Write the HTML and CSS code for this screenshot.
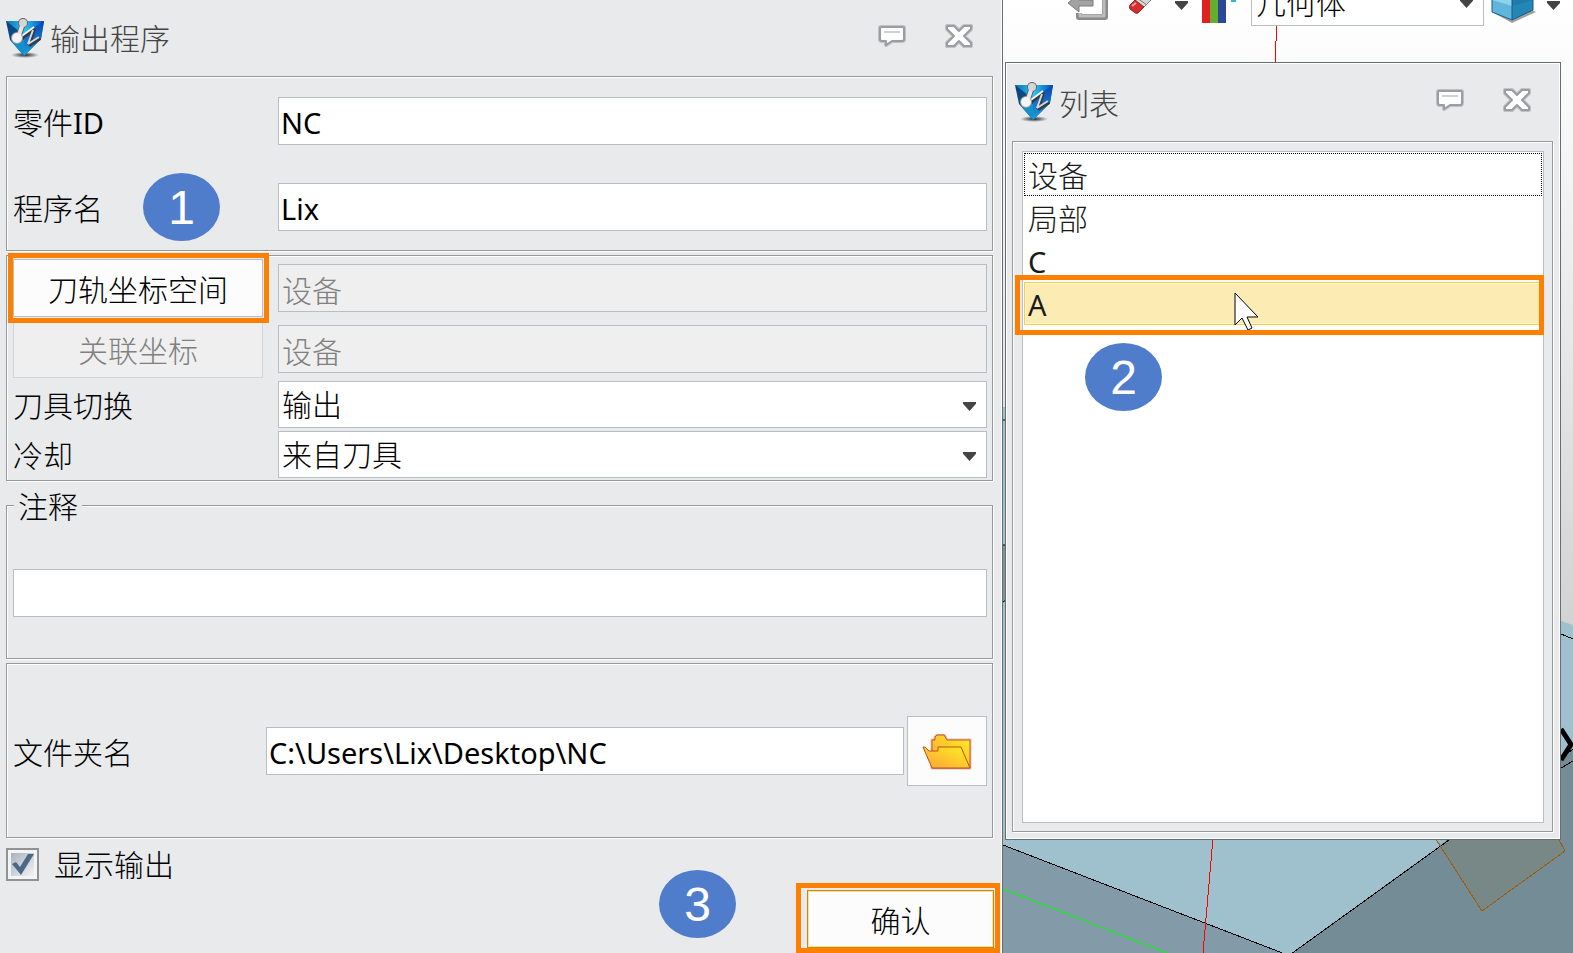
FILE: index.html
```html
<!DOCTYPE html>
<html lang="zh-CN">
<head>
<meta charset="utf-8">
<title>输出程序</title>
<link rel="stylesheet" href="styles.css">
</head>
<body>
<svg class="defs" aria-hidden="true">
  <defs>
    <linearGradient id="blueL" x1="0" y1="0" x2="1" y2="1"><stop offset="0" stop-color="#0c3f78"/><stop offset="1" stop-color="#0a6fae"/></linearGradient>
    <linearGradient id="blueR" x1="0" y1="0" x2="0" y2="1"><stop offset="0" stop-color="#0744b4"/><stop offset="1" stop-color="#1d9fdc"/></linearGradient>
    <linearGradient id="blueT" x1="0" y1="0" x2="1" y2="0"><stop offset="0" stop-color="#0e6fb8"/><stop offset=".5" stop-color="#22c9f2"/><stop offset="1" stop-color="#0746b8"/></linearGradient>
    <radialGradient id="shade"><stop offset="0" stop-color="#222"/><stop offset="1" stop-color="#222" stop-opacity="0"/></radialGradient>
    <symbol id="logo" viewBox="0 0 38 40">
      <ellipse cx="19" cy="37" rx="14" ry="3" fill="url(#shade)"/>
      <path d="M0 3H38L35 21 18 38 4 22Z" fill="url(#blueL)"/>
      <path d="M0 3H38L18 17Z" fill="url(#blueT)"/>
      <path d="M38 3L35 21 18 38V17Z" fill="url(#blueR)"/>
      <path d="M6 19L18 22V38L7 25Z" fill="#1590cf"/>
      <path d="M15 20L28 11 23 27 34 20" fill="none" stroke="#333b45" stroke-width="4" stroke-linejoin="bevel"/>
      <path d="M13 20L28 9" fill="none" stroke="#f4f4f4" stroke-width="2"/>
      <path d="M27 12L22 26 33 19" fill="none" stroke="#d4d6d9" stroke-width="2" stroke-linejoin="bevel"/>
      <path d="M17 6L12 19" stroke="#666" stroke-width="6"/>
      <circle cx="17" cy="5" r="5" fill="#666"/><circle cx="11" cy="20" r="6" fill="#999"/>
      <path d="M17 5L12 20" stroke="#e4e4e4" stroke-width="4"/>
      <circle cx="17" cy="5" r="4" fill="#d6d6d6"/><circle cx="11" cy="20" r="5" fill="#f4f4f4"/>
    </symbol>
    <symbol id="chat" viewBox="0 0 28 22">
      <path d="M3 2H25Q26 2 26 3V14Q26 16 24 16H14L8 20V16H4Q2 16 2 14V3Q2 2 3 2Z" fill="#fdfdfd" stroke="#bfc1c5" stroke-width="4" stroke-linejoin="round"/>
      <path d="M3 2H25Q26 2 26 3V14Q26 16 24 16H14L8 20V16H4Q2 16 2 14V3Q2 2 3 2Z" fill="#fdfdfd" stroke="#9b9da2" stroke-width="2" stroke-linejoin="round"/>
      <path d="M6 7H22" stroke="#d0d1d4" stroke-width="2"/>
    </symbol>
    <symbol id="close" viewBox="0 0 28 24">
      <path d="M2 2H9L14 7 19 2H26V5L19 12 26 19V22H19L14 17 9 22H2V19L9 12 2 5Z" fill="#fff" stroke="#bfc1c5" stroke-width="4" stroke-linejoin="round"/>
      <path d="M2 2H9L14 7 19 2H26V5L19 12 26 19V22H19L14 17 9 22H2V19L9 12 2 5Z" fill="#fff" stroke="#9b9da2" stroke-width="2" stroke-linejoin="round"/>
    </symbol>
  </defs>
</svg>
<main class="app">
  <form class="panel">
    <header class="head">
      <svg class="logo" aria-hidden="true"><use href="#logo"/></svg>
      <h1 class="title">输出程序</h1>
      <button class="tool" type="button" aria-label="帮助"><svg class="chat"><use href="#chat"/></svg></button>
      <button class="tool" type="button" aria-label="关闭"><svg class="close"><use href="#close"/></svg></button>
    </header>

    <section class="group names">
      <label for="part">零件<span class="latin">ID</span></label>
      <input id="part" class="field latin" type="text" value="NC">
      <label for="prog">程序名</label>
      <input id="prog" class="field latin" type="text" value="Lix">
      <span class="badge badge-one">1</span>
    </section>

    <section class="group options">
      <span class="marked"><button class="btn wide" type="button">刀轨坐标空间</button></span>
      <input class="field" type="text" value="设备" aria-label="刀轨坐标空间" disabled>
      <button class="btn wide" type="button" disabled>关联坐标</button>
      <input class="field" type="text" value="设备" aria-label="关联坐标" disabled>
      <label for="change">刀具切换</label>
      <span class="drop"><select id="change" class="field"><option>输出</option></select></span>
      <label for="cool">冷却</label>
      <span class="drop"><select id="cool" class="field"><option>来自刀具</option></select></span>
    </section>

    <section class="group notes">
      <label class="legend" for="note">注释</label>
      <input id="note" class="field" type="text">
    </section>

    <section class="group folder">
      <label for="dir">文件夹名</label>
      <input id="dir" class="field latin" type="text" value="C:\Users\Lix\Desktop\NC">
      <button class="btn browse" type="button" aria-label="浏览">
        <svg width="50" height="36" viewBox="0 0 50 36">
          <defs><linearGradient id="fold" x1="0" y1="1" x2="1" y2="0"><stop offset="0" stop-color="#faa23a"/><stop offset="1" stop-color="#ffef20"/></linearGradient></defs>
          <path d="M10 34V6H13V3L15 1H22L25 6H48V34Z" fill="url(#fold)" stroke="#e9b9ac" stroke-width="3"/>
          <path d="M10 34V6H13V3L15 1H22L25 6H48V34Z" fill="url(#fold)" stroke="#bd5a2a"/>
          <path d="M10 34L1 13 3 13 7 17H16V13H39L48 34Z" fill="url(#fold)" stroke="#b9521f"/>
        </svg>
      </button>
    </section>

    <label class="check">
      <span class="tick">
        <input type="checkbox" checked>
        <svg viewBox="0 0 33 33" aria-hidden="true">
          <defs><linearGradient id="box" x1="0" y1="0" x2="1" y2="1"><stop offset="0" stop-color="#a8b2bd"/><stop offset="1" stop-color="#f2f3f4"/></linearGradient></defs>
          <rect x="5" y="5" width="23" height="23" fill="url(#box)"/>
          <path d="M6 16L10 14 14 19 22 6H28L15 27Z" fill="#4c6886"/>
        </svg>
      </span>
      显示输出
    </label>

    <footer class="foot">
      <span class="badge badge-three">3</span>
      <span class="marked"><button class="btn ok" type="submit">确认</button></span>
    </footer>
  </form>

  <section class="stage">
    <svg class="scene" viewBox="0 0 570 953" preserveAspectRatio="xMinYMin slice" aria-hidden="true">
      <defs><linearGradient id="sky" x1="0" y1="0" x2="0" y2="1"><stop offset="0" stop-color="#fff"/><stop offset=".12" stop-color="#f8f8f8"/><stop offset=".65" stop-color="#d3d3d3"/></linearGradient></defs>
      <rect width="570" height="953" fill="url(#sky)"/>
      <path d="M0 407H300L558 621 570 625V953H0Z" fill="#9fc0cd"/>
      <path d="M0 545H10V601H0Z" fill="#7d949f"/>
      <path d="M0 420H3M0 545H3M0 602L3 600" stroke="#000"/>
      <path d="M0 845L284 955H0Z" fill="#839ba8"/>
      <path d="M286 955L445 840 570 748V953Z" fill="#748c96"/>
      <path d="M558 765L570 750V953H558Z" fill="#748c96"/>
      <path d="M432 838L479 911 562 851 555 838Z" fill="#778886"/>
      <path d="M432 838H446L438 845Z" fill="#a0b9bf"/>
      <g fill="none" shape-rendering="crispEdges">
        <path d="M0 845L282 954M288 954L446 840M558 634L570 639M565 753L570 749M558 768L570 761" stroke="#000"/>
        <path d="M432 838L479 911 562 851 555 838" stroke="#9c5d0c"/>
        <path d="M0 889L167 954" stroke="#0f0"/>
        <path d="M275 0L272 62M210 838L200 953" stroke="#f00"/>
      </g>
      <path d="M558 729L568 744.500 558 760" fill="none" stroke="#000" stroke-width="5"/>
    </svg>

    <div class="bar">
      <svg width="120" height="26" viewBox="0 0 120 26" aria-hidden="true">
        <path d="M14 13V17H40V-2" fill="none" stroke="#8b8b8b" stroke-width="6" stroke-linejoin="round"/>
        <path d="M15 13V16H39V-2" fill="none" stroke="#bcbcbc" stroke-width="3" stroke-linejoin="round"/>
        <path d="M3 3L14-6V0H28V6H14V12Z" fill="#a2a2a2" stroke="#7c7c7c"/>
        <path d="M65 5L78-8 88-2 74 12Z" fill="#d8d8d8" stroke="#777"/>
        <path d="M72-2L82 5" stroke="#777"/>
        <path d="M65 5L70 0 79 7 73 13Q71 14 69 12L65 9Q64 7 65 5Z" fill="#cf3030" stroke="#a01d1d"/>
        <path d="M67 6L71 3" stroke="#f6a0a0" stroke-width="2"/>
        <path d="M110 1H123V3L116.500 10 110 3Z" fill="#444"/>
      </svg>
      <svg width="66" height="26" viewBox="0 0 66 26" aria-hidden="true">
        <path d="M17 0H25V23H17Z" fill="#e32020"/><path d="M25 0H33V23H25Z" fill="#67ad2d"/><path d="M33 0H41V23H33Z" fill="#2b4897"/>
        <path d="M46 0H51V2H46Z" fill="#2fb6d4"/>
      </svg>
      <span class="drop filter"><select class="field" aria-label="过滤器"><option>几何体</option></select></span>
      <svg width="89" height="26" viewBox="0 0 89 26" aria-hidden="true">
        <path d="M8 12L28 23 52 12 44 8H14Z" fill="#777" opacity=".7"/>
        <path d="M8-8H28V20L8 12Z" fill="#8ed3ee"/><path d="M28-2L49-8V10L28 20Z" fill="#1d7cab"/>
        <path d="M8 0L28 6V20L8 12Z" fill="#5fb5da"/><path d="M28 6L49 0V10L28 20Z" fill="#2386b5"/>
        <path d="M8-8V12L28 20 49 10V-8M28 20V-2" fill="none" stroke="#155f86"/>
        <path d="M63 1H76V3L69.500 10 63 3Z" fill="#444"/>
      </svg>
    </div>

    <section class="dialog">
      <header class="head">
        <svg class="logo" aria-hidden="true"><use href="#logo"/></svg>
        <h2 class="title">列表</h2>
        <button class="tool" type="button" aria-label="帮助"><svg class="chat"><use href="#chat"/></svg></button>
        <button class="tool" type="button" aria-label="关闭"><svg class="close"><use href="#close"/></svg></button>
      </header>
      <div class="group frame">
        <ul class="list" role="listbox" aria-label="列表">
          <li class="item focus" role="option">设备</li>
          <li class="item" role="option">局部</li>
          <li class="item latin" role="option">C</li>
          <li class="item latin hot" role="option" aria-selected="true">A
            <svg class="cursor" width="26" height="40" viewBox="0 0 26 40" aria-hidden="true"><path d="M1 1V33L8 26 14 38 18 36 13 25H24Z" fill="#fff" stroke="#000"/></svg>
          </li>
        </ul>
        <span class="badge badge-two">2</span>
      </div>
    </section>
  </section>
</main>
</body>
</html>
```
FILE: styles.css
```css
* { box-sizing: border-box; }
body {
  margin: 0;
  background: #e8eaeb;
  color: #000;
  font: 300 30px/40px "Noto Sans", "Noto Sans CJK SC", sans-serif;
  overflow: hidden;
}
.defs { position: absolute; width: 0; height: 0; }
input, select, button { font: inherit; color: inherit; margin: 0; border-radius: 0; }
.latin { font-size: 29px; font-weight: 400; }

.app {
  display: grid;
  grid-template-columns: 1003fr 570fr;
  min-height: 100vh;
}
.panel {
  display: flex;
  flex-direction: column;
  min-width: 0;
  padding: 0 9px 0 6px;
  background: #e8eaeb;
  border-right: 1px solid #666d73;
  box-shadow: inset -1px 0 0 #fff;
}

.head {
  display: flex;
  align-items: center;
  height: 76px;
}
.logo { width: 38px; height: 40px; }
.title {
  flex: 1;
  margin: 2px 0 0 6px;
  color: #444;
  font-size: 30px;
  font-weight: 300;
}
.tool {
  display: flex;
  margin: 0 20px 5px 19px;
  padding: 0;
  border: 0;
  background: none;
}
.chat { width: 28px; height: 22px; }
.close { width: 28px; height: 24px; }
.tool svg { overflow: visible; }

.group {
  position: relative;
  border: 1px solid #999;
  box-shadow: 1px 1px 0 #fff, inset 1px 1px 0 #fff;
}
.group > label { padding-top: 3px; }
.field {
  width: 100%;
  min-width: 0;
  height: 48px;
  padding: 1px 3px 0;
  border: 1px solid #b8bec4;
  background: #fff;
  outline: 0;
}
.field.latin { padding: 2px 2px 0; }
.field:disabled { background: #efefef; color: #808080; }
select.field { height: 47px; appearance: none; }

.drop { position: relative; display: flex; }
.drop::after {
  content: "";
  position: absolute;
  top: 21px;
  right: 11px;
  width: 13px;
  height: 9px;
  background: #444;
  clip-path: polygon(0 0, 100% 0, 100% 20%, 50% 100%, 0 20%);
  pointer-events: none;
}

.names {
  display: grid;
  grid-template-columns: 265px 1fr;
  align-items: center;
  row-gap: 38px;
  padding: 20px 5px 19px 6px;
}
.options {
  display: grid;
  grid-template-columns: 250px 1fr;
  align-items: center;
  gap: 3px 15px;
  margin-top: 4px;
  padding: 3px 5px 2px 6px;
}
.notes { margin-top: 24px; padding: 63px 5px 41px 6px; }
.notes .field { display: block; }
.group > .legend {
  position: absolute;
  top: -20px;
  left: 7px;
  padding: 1px 4px 0;
  background: #e8eaeb;
}
.folder {
  display: grid;
  grid-template-columns: 250px 1fr 80px;
  align-items: center;
  column-gap: 3px;
  margin-top: 4px;
  padding: 52px 5px 51px 6px;
}

.btn {
  height: 58px;
  padding: 3px 0 0;
  border: 1px solid #b8bec4;
  background: #fcfcfc;
}
.btn:disabled { border-color: #d2d5d8; background: #efefef; color: #808080; }
.wide { width: 100%; }
.browse {
  display: flex;
  align-items: center;
  justify-content: center;
  height: 70px;
  padding: 1px 0 0;
}
.ok {
  width: 187px;
  border-color: #bf8a2c;
  box-shadow: inset 0 0 0 1px #ffe27a;
}

.marked { position: relative; z-index: 1; display: flex; }
.marked::after {
  content: "";
  position: absolute;
  inset: -6px -6px -6px -5px;
  border: 5px solid #ff8000;
  pointer-events: none;
}

.check {
  display: flex;
  align-items: center;
  gap: 15px;
  height: 33px;
  margin-top: 10px;
}
.tick { position: relative; display: flex; }
.tick input {
  width: 33px;
  height: 33px;
  appearance: none;
  border: 2px solid #929292;
  background: #f3f4f5;
}
.tick svg { position: absolute; inset: 0; pointer-events: none; }

.foot {
  position: relative;
  display: flex;
  justify-content: flex-end;
  margin: 9px -1px 0 0;
}
.foot .marked::after { inset: -7px -6px -5px -11px; }

.badge {
  position: absolute;
  width: 77px;
  height: 68px;
  border-radius: 50%;
  background: #4f7dcb;
  color: #fff;
  font: 48px/70px "Liberation Sans", sans-serif;
  text-align: center;
}
.badge-one { left: 136px; top: 96px; }
.badge-two { left: 72px; top: 201px; }
.badge-three { right: 258px; top: -20px; }

.stage { position: relative; min-width: 0; overflow: hidden; }
.scene { position: absolute; inset: 0; width: 100%; height: 100%; }
.bar {
  position: relative;
  display: flex;
  align-items: flex-end;
  height: 26px;
  padding-left: 62px;
  overflow: hidden;
}
.bar svg { flex: none; overflow: visible; }
.filter { flex: 1; }
.filter .field { height: 48px; padding: 2px 4px 0; }
.dialog {
  position: absolute;
  inset: 62px 12px 113px 2px;
  display: flex;
  flex-direction: column;
  padding: 0 7px 7px 6px;
  background: #e8eaeb;
  border: 1px solid #666d73;
  box-shadow: inset 0 0 0 1px #fff;
}
.dialog .head { height: 78px; padding: 0 2px 0 3px; }
.dialog .title { margin-top: 3px; }
.frame { flex: 1; display: flex; padding: 9px 8px 8px 9px; }
.list {
  flex: 1;
  margin: 0;
  padding: 1px;
  list-style: none;
  background: #fff;
  border: 1px solid #b8bec4;
}
.item {
  position: relative;
  height: 43px;
  padding: 2px 3px 0;
  border: 1px solid transparent;
  color: #1a1a1a;
}
.focus { border: 1px dotted #000; }
.hot {
  border-color: #f6cf4e;
  background: #fcecb3;
  box-shadow: inset 0 0 0 1px #fff5d0;
}
.hot::after {
  content: "";
  position: absolute;
  inset: -8px -3px -11px -10px;
  border: 5px solid #ff8000;
}
.cursor { position: absolute; left: 209px; top: 9px; }
```
